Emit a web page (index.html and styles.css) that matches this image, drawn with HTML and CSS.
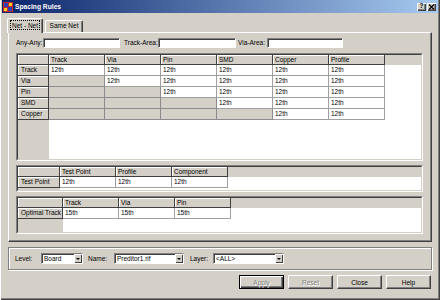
FILE: index.html
```html
<!DOCTYPE html>
<html lang="en">
<head>
  <meta charset="UTF-8" />
  <title>Spacing Rules</title>
  <link rel="stylesheet" href="styles.css">
</head>
<body>
  <div class="window">
    <!-- Title bar -->
    <div class="titlebar">
      <svg class="app-icon" viewBox="0 0 10 10">
        <rect width="10" height="10" fill="#c8282a"/>
        <rect x="1" y="1" width="4" height="4" fill="#2a3fb8"/>
        <rect x="5" y="5" width="4" height="4" fill="#2a3fb8"/>
        <rect x="6" y="1" width="3" height="3" fill="#f0d020"/>
        <rect x="1" y="6" width="3" height="3" fill="#f0d020"/>
      </svg>
      <span class="title">Spacing Rules</span>
      <span class="caption-btn">?</span>
      <span class="caption-btn">
        <svg viewBox="0 0 7 6" width="7" height="6"><path d="M1 0.5 L6 5.5 M6 0.5 L1 5.5" stroke="#000" stroke-width="1.2"/></svg>
      </span>
    </div>

    <div class="client">
      <!-- Tabs -->
      <div class="tabs">
        <div class="tab active"><span class="focus">Net - Net</span></div>
        <div class="tab">Same Net</div>
      </div>

      <div class="panel">
        <div class="areas">
          <span class="lbl lbl-any">Any-Any:</span><span class="edit edit-any"></span>
          <span class="lbl lbl-track">Track-Area:</span><span class="edit edit-track"></span>
          <span class="lbl lbl-via">Via-Area:</span><span class="edit edit-via"></span>
        </div>

        <!-- Net-Net matrix -->
        <div class="grid grid-main">
          <div class="frame">
            <div class="row head">
              <span class="corner"></span>
              <span class="ch">Track</span><span class="ch">Via</span><span class="ch">Pin</span>
              <span class="ch">SMD</span><span class="ch">Copper</span><span class="ch">Profile</span>
            </div>
            <div class="row">
              <span class="rh">Track</span>
              <span class="c">12th</span><span class="c">12th</span><span class="c">12th</span>
              <span class="c">12th</span><span class="c">12th</span><span class="c">12th</span>
            </div>
            <div class="row">
              <span class="rh">Via</span>
              <span class="c off"></span><span class="c">12th</span><span class="c">12th</span>
              <span class="c">12th</span><span class="c">12th</span><span class="c">12th</span>
            </div>
            <div class="row">
              <span class="rh">Pin</span>
              <span class="c off"></span><span class="c off"></span><span class="c">12th</span>
              <span class="c">12th</span><span class="c">12th</span><span class="c">12th</span>
            </div>
            <div class="row">
              <span class="rh">SMD</span>
              <span class="c off"></span><span class="c off"></span><span class="c off"></span>
              <span class="c">12th</span><span class="c">12th</span><span class="c">12th</span>
            </div>
            <div class="row">
              <span class="rh">Copper</span>
              <span class="c off"></span><span class="c off"></span><span class="c off"></span>
              <span class="c off"></span><span class="c">12th</span><span class="c">12th</span>
            </div>
            <div class="filler"></div>
          </div>
        </div>

        <!-- Test point -->
        <div class="grid grid-tp">
          <div class="frame">
            <div class="row head">
              <span class="corner"></span>
              <span class="ch">Test Point</span><span class="ch">Profile</span><span class="ch">Component</span>
            </div>
            <div class="row">
              <span class="rh">Test Point</span>
              <span class="c">12th</span><span class="c">12th</span><span class="c">12th</span>
            </div>
            <div class="filler"></div>
          </div>
        </div>

        <!-- Optimal track -->
        <div class="grid grid-opt">
          <div class="frame">
            <div class="row head">
              <span class="corner"></span>
              <span class="ch">Track</span><span class="ch">Via</span><span class="ch">Pin</span>
            </div>
            <div class="row">
              <span class="rh">Optimal Track</span>
              <span class="c">15th</span><span class="c">15th</span><span class="c">15th</span>
            </div>
            <div class="filler"></div>
          </div>
        </div>
      </div>

      <!-- Level / Name / Layer -->
      <div class="filter">
        <span class="lbl lbl-level">Level:</span>
        <span class="combo combo-level">Board<span class="drop"></span></span>
        <span class="lbl lbl-name">Name:</span>
        <span class="combo combo-name">Preditor1.rif<span class="drop"></span></span>
        <span class="lbl lbl-layer">Layer:</span>
        <span class="combo combo-layer">&lt;ALL&gt;<span class="drop"></span></span>
      </div>

      <div class="buttons">
        <button class="btn default" disabled>Apply</button>
        <button class="btn" disabled>Reset</button>
        <button class="btn">Close</button>
        <button class="btn">Help</button>
      </div>
    </div>
  </div>
</body>
</html>
```

FILE: styles.css
```css
* {
  box-sizing: border-box;
}
body {
  margin: 0;
  font-family: "Liberation Sans", Arial, sans-serif;
  font-size: 6.5px;
  color: #000;
  background: #d4d0c8;
}
.window {
  width: 440px;
  height: 300px;
  padding: 0 2px 2px;
  background: #d4d0c8;
  box-shadow: inset 1px 0 #fff, inset -1px -1px #404040, inset -2px -2px #808080;
  display: flex;
  flex-direction: column;
}
/* Title bar */
.titlebar {
  height: 13px;
  display: flex;
  align-items: center;
  padding: 0 2px 0 1px;
  background: linear-gradient(to right, #0a246a, #a6caf0);
  color: #fff;
  font-weight: bold;
}
.app-icon {
  width: 10px;
  height: 10px;
  margin-right: 2px;
}
.title {
  flex: 1;
  font-size: 6.7px;
}
.caption-btn {
  width: 9px;
  height: 8px;
  margin-left: 1px;
  background: #d4d0c8;
  box-shadow: inset 1px 1px #fff, inset -1px -1px #404040, inset -2px -2px #808080;
  display: flex;
  align-items: center;
  justify-content: center;
  color: #000;
  font-size: 6.5px;
  line-height: 1;
}
.client {
  flex: 1;
  padding: 0 6px;
  display: flex;
  flex-direction: column;
}
/* Tabs */
.tabs {
  margin-top: 5px;
  height: 14px;
  margin-left: -1px;
  display: flex;
  align-items: flex-end;
}
.tab {
  height: 12px;
  width: 38px;
  margin-left: 2px;
  border: 1px solid;
  border-color: #fff #404040 transparent #fff;
  border-bottom: none;
  border-radius: 2px 2px 0 0;
  box-shadow: inset -1px 0 #808080;
  text-align: center;
  line-height: 10px;
}
.tab.active {
  width: 36px;
  height: 15px;
  margin-left: 0;
  margin-bottom: -1px;
  padding-top: 1px;
  position: relative;
  z-index: 1;
  background: #d4d0c8;
}
.focus {
  display: inline-block;
  padding: 0 1px;
  height: 10px;
  line-height: 9px;
  border: 1px dotted #000;
}
/* Tab page */
.panel {
  height: 210px;
  padding: 5px 0 0 7px;
  border: 1px solid;
  border-color: #fff #404040 #404040 #fff;
  box-shadow: inset -1px -1px #808080;
  display: flex;
  flex-direction: column;
}
.areas {
  height: 10px;
  display: flex;
  align-items: center;
}
.lbl {
  line-height: 10px;
  white-space: nowrap;
}
.lbl-any { width: 27px; }
.lbl-track { width: 34px; margin-left: 4px; }
.lbl-via { width: 29px; margin-left: 2px; }
.edit {
  height: 10px;
  background: #fff;
  border: 1px solid;
  border-color: #808080 #fff #fff #808080;
  box-shadow: inset 1px 1px #404040;
}
.edit-any { width: 77px; }
.edit-track { width: 78px; }
.edit-via { width: 76px; }
/* Grids */
.grid {
  width: 407px;
  border: 1px solid;
  border-color: #808080 #fff #fff #808080;
}
.grid-main { margin-top: 5px; height: 108px; --rh: 31px; }
.grid-tp { margin-top: 4px; height: 27px; --rh: 42px; }
.grid-opt { margin-top: 4px; height: 38px; --rh: 45px; }
.frame {
  height: 100%;
  border: 1px solid;
  border-color: #404040 #d4d0c8 #d4d0c8 #404040;
  background: #fff;
  display: flex;
  flex-direction: column;
  overflow: hidden;
}
.row {
  display: flex;
  height: 11px;
  flex: none;
}
.row.head {
  height: 10px;
  background: #d4d0c8;
}
.corner, .ch, .rh {
  background: #d4d0c8;
  border-right: 1px solid #404040;
  border-bottom: 1px solid #404040;
  box-shadow: inset 1px 1px #fff;
}
.corner, .rh {
  width: var(--rh);
}
.ch, .c {
  width: 56px;
  padding-left: 2px;
  white-space: nowrap;
}
.ch {
  line-height: 9px;
}
.rh {
  padding-left: 3px;
  line-height: 10px;
  white-space: nowrap;
}
.c {
  border-right: 1px solid #a0a0a0;
  border-bottom: 1px solid #a0a0a0;
  line-height: 10px;
}
.c.off {
  background: #d4d0c8;
  border-color: #8c8c8c;
}
.filler {
  flex: 1;
  background: linear-gradient(to right, #d4d0c8 var(--rh), #fff var(--rh));
}
/* Level / Name / Layer group */
.filter {
  margin-top: 5px;
  height: 23px;
  padding-left: 6px;
  border: 1px solid #808080;
  box-shadow: inset 1px 1px #fff, 1px 1px #fff;
  display: flex;
  align-items: center;
}
.lbl-level { width: 26px; }
.lbl-name { width: 26px; margin-left: 5px; }
.lbl-layer { width: 23px; margin-left: 6px; }
.combo {
  height: 11px;
  padding-left: 2px;
  background: #fff;
  border: 1px solid;
  border-color: #808080 #fff #fff #808080;
  box-shadow: inset 1px 1px #404040;
  display: flex;
  align-items: center;
  white-space: nowrap;
}
.combo-level { width: 42px; }
.combo-name { width: 70px; }
.combo-layer { width: 71px; }
.drop {
  margin-left: auto;
  width: 8px;
  height: 9px;
  background: #d4d0c8;
  box-shadow: inset 1px 1px #fff, inset -1px -1px #404040;
  position: relative;
}
.drop::after {
  content: "";
  position: absolute;
  left: 2px;
  top: 4px;
  border-left: 2px solid transparent;
  border-right: 2px solid transparent;
  border-top: 2px solid #000;
}
/* Dialog buttons */
.buttons {
  margin-top: 5px;
  padding-right: 1px;
  display: flex;
  justify-content: flex-end;
  gap: 4px;
}
.btn {
  width: 45px;
  height: 14px;
  padding: 0;
  font-family: inherit;
  font-size: 6.5px;
  color: #000;
  background: #d4d0c8;
  border: 1px solid;
  border-color: #fff #404040 #404040 #fff;
  box-shadow: inset -1px -1px #808080;
}
.btn.default {
  border-color: #000;
  box-shadow: inset 1px 1px #fff, inset -1px -1px #404040, inset -2px -2px #808080;
}
.btn:disabled {
  color: #808080;
  text-shadow: 1px 1px #fff;
}
```
